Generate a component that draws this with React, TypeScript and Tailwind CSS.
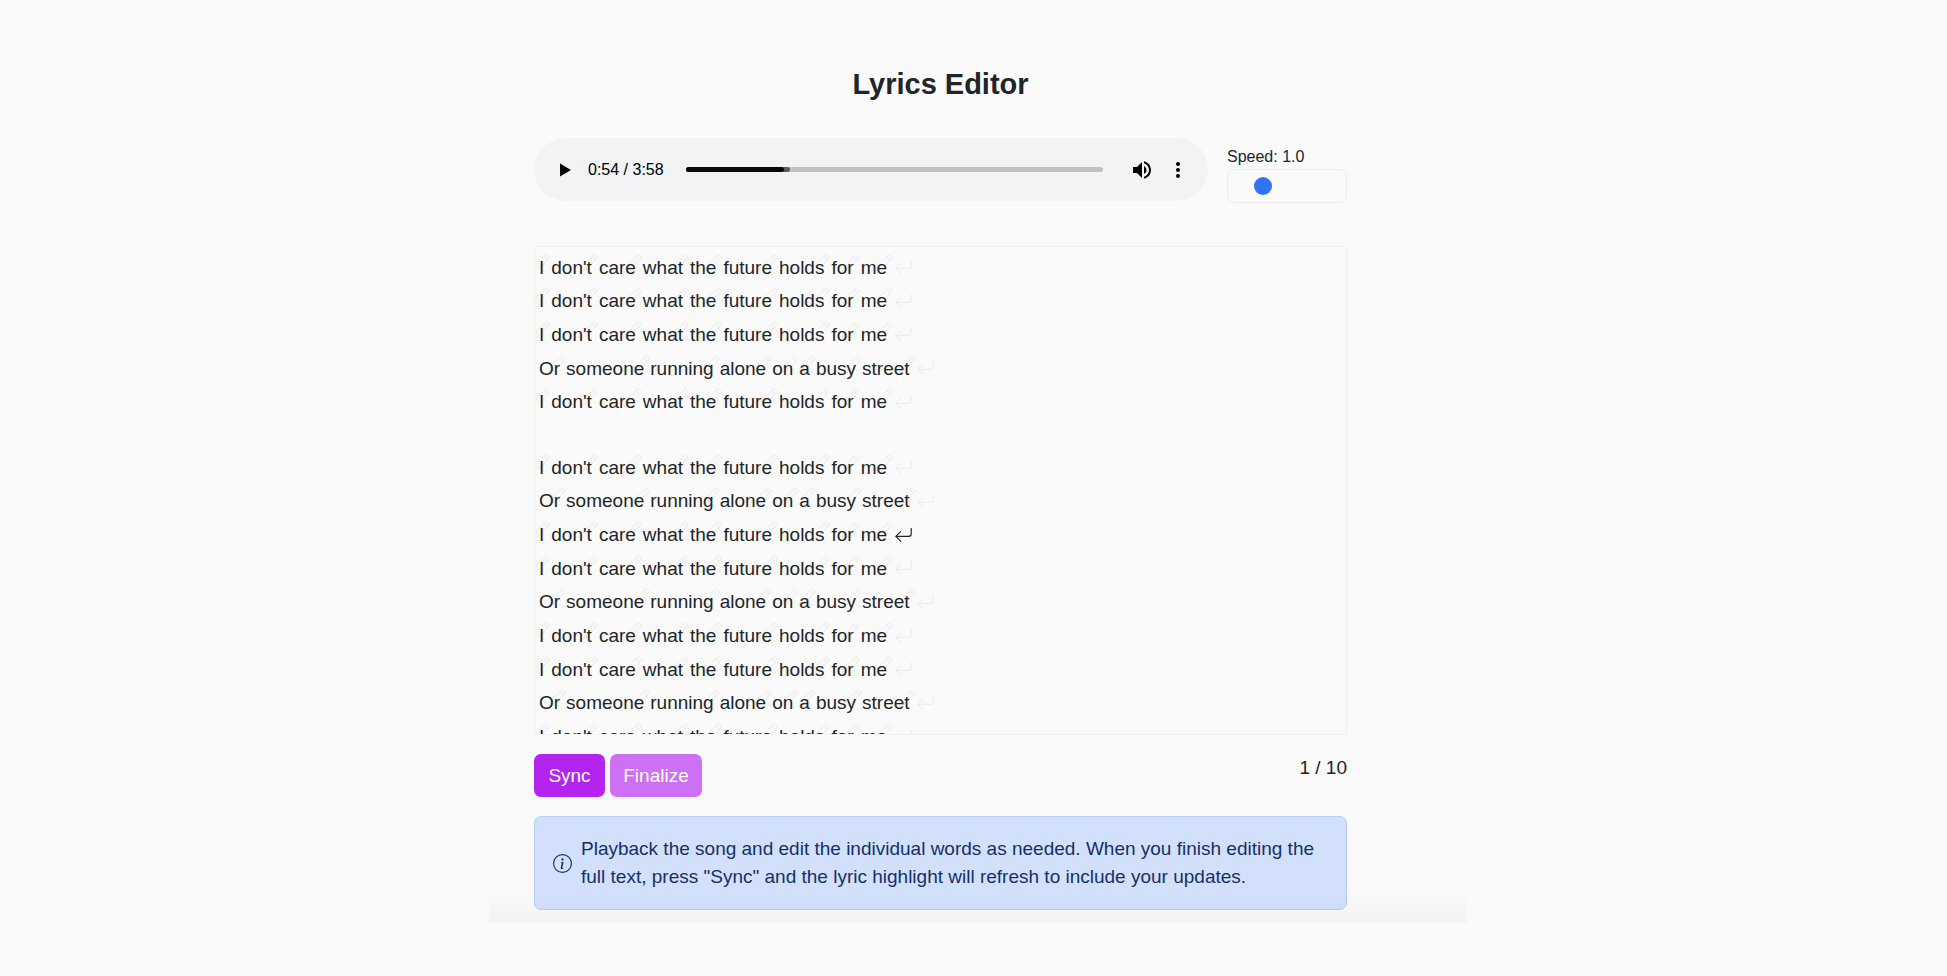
import { useState } from "react";
import { BsArrowReturnLeft, BsInfoCircle, BsPencil } from "react-icons/bs";

const CARE = "I don't care what the future holds for me";
const STREET = "Or someone running alone on a busy street";

const verses = [
  {
    height: "h-[168px]",
    lines: [CARE, CARE, CARE, STREET, CARE],
  },
  {
    height: "h-[303px]",
    lines: [CARE, STREET, CARE, CARE, STREET, CARE, CARE, STREET, CARE],
  },
];

interface LyricLineProps {
  text: string;
  isCurrent?: boolean;
}

const LyricLine = ({ text, isCurrent = false }: LyricLineProps) => {
  return (
    <div
      className={`flex items-center ${
        text === CARE ? "gap-[7px]" : "gap-[6px]"
      }`}
    >
      {text.split(" ").map((word, i) => (
        <span key={i} className="relative whitespace-nowrap">
          <BsPencil
            size={18}
            className="absolute top-0 -right-[6px] text-[#eeeeee]"
          />
          <span className="relative">{word}</span>
        </span>
      ))}
      <BsArrowReturnLeft
        size={19}
        className={isCurrent ? "text-[#212529]" : "text-[#ededed]"}
      />
    </div>
  );
};

const Player = () => {
  const [position, setPosition] = useState(54);

  return (
    <div className="flex h-[63px] flex-1 items-center rounded-full bg-[#f1f3f4] pr-[18px] pl-[22px] text-black">
      <button type="button" aria-label="Play" className="shrink-0">
        <svg width="20" height="20" viewBox="0 0 20 20" fill="currentColor">
          <path d="M4 3.5v13L15 10z" />
        </svg>
      </button>
      <span className="ml-3 whitespace-nowrap text-base">0:54 / 3:58</span>
      <div className="relative mr-[27px] ml-[22px] flex h-[5px] flex-1 overflow-hidden rounded-full bg-[#c1c2c3]">
        <div className="w-[25%] rounded-r-full bg-[#5a5b5b]">
          <div className="h-full w-[94%] rounded-r-full bg-[#0a0a0a]" />
        </div>
        <input
          type="range"
          aria-label="Seek"
          min={0}
          max={238}
          value={position}
          onChange={(e) => setPosition(Number(e.target.value))}
          className="absolute inset-0 w-full cursor-pointer opacity-0"
        />
      </div>
      <button type="button" aria-label="Mute" className="shrink-0">
        <svg width="24" height="24" viewBox="0 0 24 24" fill="currentColor">
          <path d="M3 9v6h4l5 5V4L7 9H3zm13.5 3c0-1.77-1.02-3.29-2.5-4.03v8.05c1.48-.73 2.5-2.25 2.5-4.02zM14 3.23v2.06c2.89.86 5 3.54 5 6.71s-2.11 5.85-5 6.71v2.06c4.01-.91 7-4.49 7-8.77s-2.99-7.86-7-8.77z" />
        </svg>
      </button>
      <button type="button" aria-label="More options" className="ml-3 shrink-0">
        <svg width="24" height="24" viewBox="0 0 24 24" fill="currentColor">
          <path d="M12 8c1.1 0 2-.9 2-2s-.9-2-2-2-2 .9-2 2 .9 2 2 2zm0 2c-1.1 0-2 .9-2 2s.9 2 2 2 2-.9 2-2-.9-2-2-2zm0 6c-1.1 0-2 .9-2 2s.9 2 2 2 2-.9 2-2-.9-2-2-2z" />
        </svg>
      </button>
    </div>
  );
};

const App = () => {
  const [speed, setSpeed] = useState(1);

  return (
    <div className="min-h-screen bg-[#fafafa] pl-[9px] font-['Liberation_Sans',Arial,sans-serif] text-[19px] leading-7 text-[#212529]">
      <main className="relative mx-auto max-w-[978px] pt-16 pr-[120px] pb-[13px] pl-[45px]">
        <h1 className="text-center text-[29px] leading-10 font-bold">
          Lyrics Editor
        </h1>

        <div className="mt-[34px] flex gap-[19px]">
          <Player />
          <div className="mt-2 w-[120px]">
            <label
              htmlFor="speed"
              className="mb-[2px] block text-base leading-[21px]"
            >
              Speed: {speed.toFixed(1)}
            </label>
            <div className="flex h-[34px] items-center rounded-[7px] border border-[#ececec] px-[14px]">
              <input
                id="speed"
                type="range"
                min={0.5}
                max={3.5}
                step={0.1}
                value={speed}
                onChange={(e) => setSpeed(Number(e.target.value))}
                className="w-full appearance-none bg-transparent [&::-webkit-slider-thumb]:size-[18px] [&::-webkit-slider-thumb]:appearance-none [&::-webkit-slider-thumb]:rounded-full [&::-webkit-slider-thumb]:bg-[#3273f6]"
              />
            </div>
          </div>
        </div>

        <section className="mt-[43px] h-[489px] overflow-hidden border border-[#f1f1f1] p-1">
          {verses.map(({ height, lines }, v) => (
            <div key={v} className={`mb-8 grid auto-rows-fr ${height}`}>
              {lines.map((text, i) => (
                <LyricLine key={i} text={text} isCurrent={v === 1 && i === 2} />
              ))}
            </div>
          ))}
        </section>

        <div className="mt-[19px] flex items-start justify-between">
          <div className="flex gap-[5px]">
            <button
              type="button"
              className="h-[43px] w-[71px] rounded-[7px] bg-[#b524ee] text-white"
            >
              Sync
            </button>
            <button
              type="button"
              className="h-[43px] w-[92px] rounded-[7px] bg-[#ce70f5] text-white"
            >
              Finalize
            </button>
          </div>
          <span>1 / 10</span>
        </div>

        <div
          role="alert"
          className="mt-[19px] flex items-center gap-[9px] rounded-[7px] border border-[#b6cffb] bg-[#d3e0fc] p-[18px] text-[#14306b]"
        >
          <BsInfoCircle size={19} className="shrink-0" />
          <p>
            Playback the song and edit the individual words as needed. When you
            finish editing the full text, press "Sync" and the lyric highlight
            will refresh to include your updates.
          </p>
        </div>

        <div className="pointer-events-none absolute inset-x-0 bottom-0 h-8 bg-linear-to-b from-transparent to-black/3" />
      </main>
    </div>
  );
};

export default App;
